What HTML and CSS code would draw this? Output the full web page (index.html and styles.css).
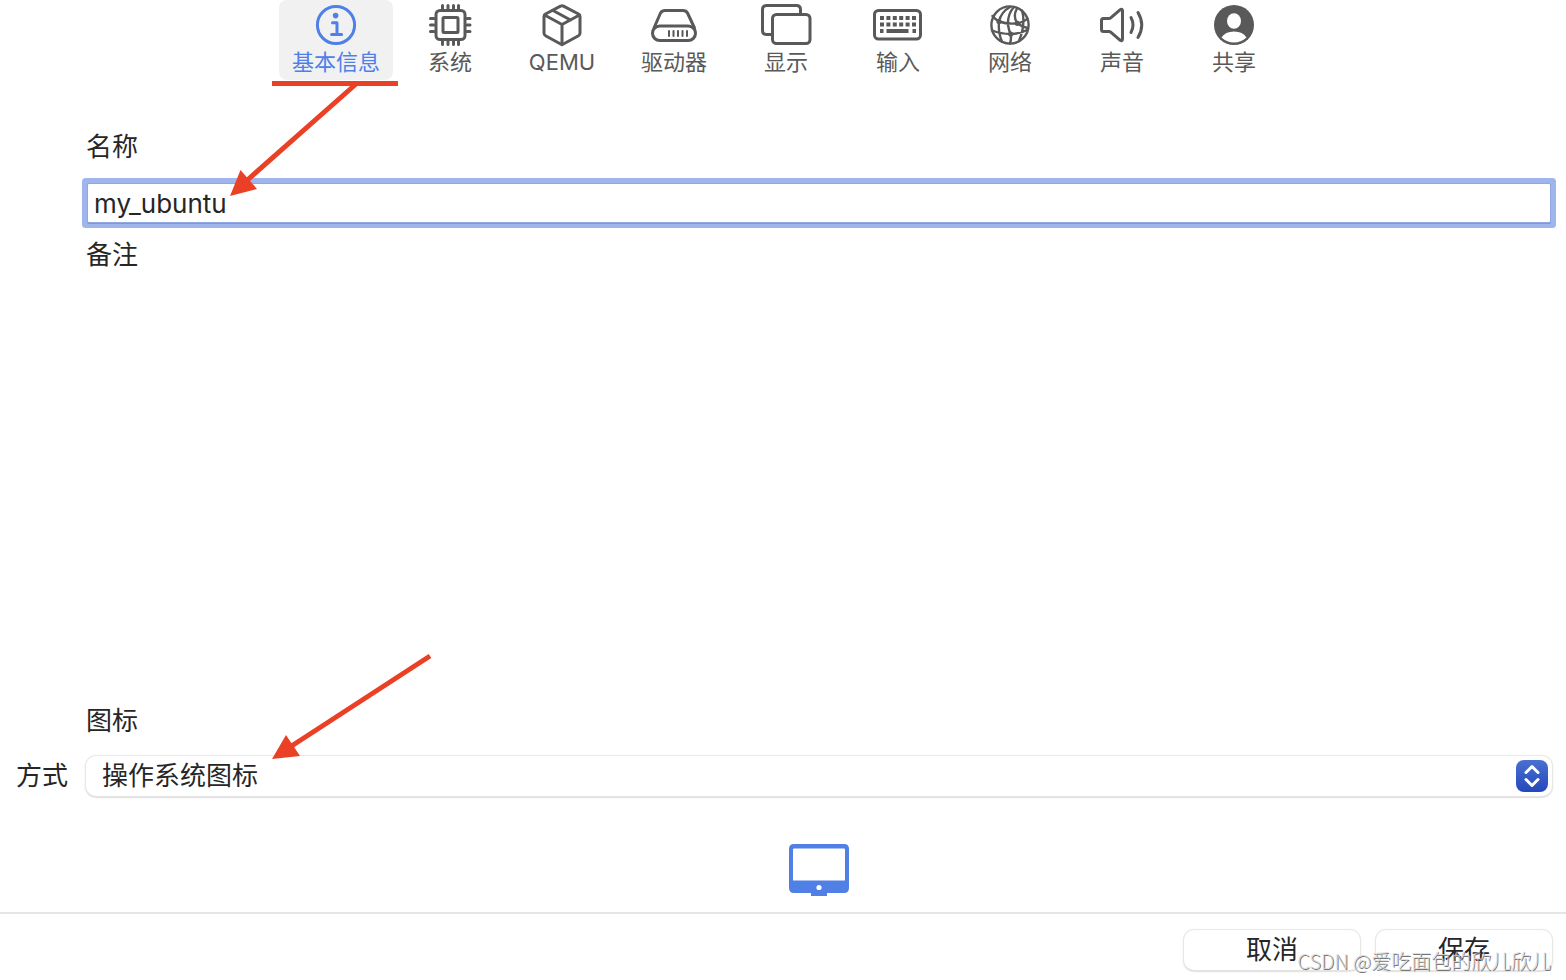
FILE: index.html
```html
<!DOCTYPE html>
<html lang="zh-CN">
<head>
    <meta charset="UTF-8">
    <meta name="viewport" content="width=device-width, initial-scale=1.0">
    <title>虚拟机设置</title>
    <link rel="stylesheet" href="styles.css">
</head>
<body>

<nav class="tabs">
    <button type="button" class="tab active">
        <svg class="icon" viewBox="0 0 52 48">
            <circle cx="26" cy="25" r="18.6"/>
            <circle class="solid" cx="25.6" cy="15.6" r="2.8"/>
            <path d="M22.5 22.8H27V34M21.6 34.4h10"/>
        </svg>
        <span>基本信息</span>
    </button>
    <button type="button" class="tab">
        <svg class="icon" viewBox="0 0 52 48">
            <rect x="12" y="10.500" width="29" height="29" rx="4"/>
            <rect x="19" y="17.500" width="15" height="15" rx="1"/>
            <path d="M18.500 9V5.500M24 9V5.500M29.500 9V5.500M34.500 9V5.500M18.500 41v3.500M24 41v3.500M29.500 41v3.500M34.500 41v3.500M10 18.500H6.500M10 25H6.500M10 31.500H6.500M43 18.500h3M43 25h3M43 31.500h3"/>
        </svg>
        <span>系统</span>
    </button>
    <button type="button" class="tab">
        <svg class="icon" viewBox="0 0 52 48">
            <path d="M24.500 6.200 9.500 14Q8 14.800 8 16.500V33q0 2 1.500 2.800L26 44.800l16.500-9Q44 35 44 33V16.500q0-1.700-1.500-2.500L27.500 6.200Q26 5.400 24.500 6.200Z"/>
            <path d="M8.500 15 26 24.500 43.500 15M26 24.500V44M17 10.500 34.500 20"/>
        </svg>
        <span>QEMU</span>
    </button>
    <button type="button" class="tab">
        <svg class="icon" viewBox="0 0 52 48">
            <path d="M6 28 12.500 13Q14 10.500 17 10.500H35Q38 10.500 39.500 13L46.500 28"/>
            <rect x="4.500" y="26" width="43" height="14.500" rx="7.200"/>
            <path class="thin" d="M21 31v5M25.500 31v5M30 31v5M34.500 31v5M39 31v5"/>
        </svg>
        <span>驱动器</span>
    </button>
    <button type="button" class="tab">
        <svg class="icon" viewBox="0 0 52 48">
            <path d="M11 34.500H6.500Q2.500 34.500 2.500 30.500V9.500Q2.500 5.500 6.500 5.500H36.500Q40.500 5.500 40.500 9.500V14"/>
            <rect x="12.500" y="14.500" width="37.500" height="29" rx="4"/>
        </svg>
        <span>显示</span>
    </button>
    <button type="button" class="tab">
        <svg class="icon" viewBox="0 0 52 48">
            <rect x="2.500" y="10.500" width="46" height="28.500" rx="4"/>
            <path class="keys" d="M8 18h36M8 24.500h36"/>
            <path class="bar" d="M8 31h3.500M14.500 31h22M40.500 31H44"/>
        </svg>
        <span>输入</span>
    </button>
    <button type="button" class="tab">
        <svg class="icon globe" viewBox="0 0 52 48">
            <circle cx="26" cy="25" r="18.600"/>
            <path d="M26 7Q17 12 15 21.500 14 33 18 41.500M30 7Q23.500 14 24 25 25 31 26.700 34 27.500 39 26 43.500M33 8.500Q28.500 16 33.300 23.300 38 27 43.500 28M8.500 16Q11 19 15 21.500 24 24.500 33.300 23.300 40 22 43.500 18.500M8 30.500Q17 34 26.700 34 37 33.500 43 30M38 10.500Q42 24 35 41"/>
            <circle class="solid" cx="15" cy="21.500" r="2.600"/>
            <circle class="solid" cx="33.300" cy="23.300" r="2.600"/>
            <circle class="solid" cx="26.700" cy="34" r="2.600"/>
        </svg>
        <span>网络</span>
    </button>
    <button type="button" class="tab">
        <svg class="icon" viewBox="0 0 52 48">
            <path d="M7.500 18.500H13Q14 18.500 15 17.600L24 9.800Q26.500 8.500 26.500 11V39Q26.500 41.500 24 40.200L15 32.400Q14 31.500 13 31.500H7.500Q5.500 31.500 5.500 29.500V20.500Q5.500 18.500 7.500 18.500Z"/>
            <path d="M35 17.500Q39 25 35 32.500M42 12.500Q49.500 25 42 37.500"/>
        </svg>
        <span>声音</span>
    </button>
    <button type="button" class="tab">
        <svg class="icon" viewBox="0 0 52 48">
            <circle class="solid" cx="26" cy="25" r="20"/>
            <ellipse class="hole" cx="26" cy="21" rx="7" ry="7.800"/>
            <path class="hole" d="M13.500 37.500Q17 31.500 26 31.500T38.500 37.500Q33 42.500 26 42.500T13.500 37.500Z"/>
        </svg>
        <span>共享</span>
    </button>
</nav>

<form class="settings">
    <label class="field-label" for="name">名称</label>
    <input type="text" id="name" value="my_ubuntu">
    <label class="field-label" for="notes">备注</label>
    <textarea id="notes"></textarea>
    <h2 class="field-label">图标</h2>
    <div class="style-row">
        <label for="icon_style">方式</label>
        <div class="picker">
            <select id="icon_style">
                <option>操作系统图标</option>
            </select>
            <svg class="stepper" viewBox="0 0 32 32">
                <path d="M10 12.500 16 6.500 22 12.500M10 19.500 16 25.500 22 19.500"/>
            </svg>
        </div>
    </div>
    <svg class="preview" viewBox="0 0 60 52">
        <path fill="#5080e6" fill-rule="evenodd" d="M5 0H55Q60 0 60 5V44Q60 49 55 49H38V52H22V49H5Q0 49 0 44V5Q0 0 5 0ZM5 4.500Q4 4.500 4 5.500V36.500H56V5.500Q56 4.500 55 4.500Z"/>
        <circle cx="30" cy="43.500" r="2.600" fill="#fff"/>
    </svg>
</form>

<footer class="actions">
    <button type="button">取消</button>
    <button type="button">保存</button>
</footer>

<!-- red marks drawn over the window -->
<svg class="marks" width="440" height="770" viewBox="0 0 440 770">
    <path class="line" d="M272 83.500H398M356 84 244 183M430 656 290 747"/>
    <path class="head" d="M230 196 240.500 170 257 189ZM272 759 286 735 300 756Z"/>
</svg>
<div class="watermark">CSDN @爱吃面包的欣儿欣儿</div>

</body>
</html>
```
FILE: styles.css
```css
* {
    box-sizing: border-box;
}
body {
    position: relative;
    display: flex;
    flex-direction: column;
    min-height: 100vh;
    margin: 0;
    background: #fff;
    color: #262626;
    font-family: Inter, "Noto Sans CJK SC", sans-serif;
    font-size: 26px;
    line-height: 36px;
}
button, input, select, textarea {
    color: inherit;
    font: inherit;
}

/* toolbar */
.tabs {
    display: flex;
    justify-content: center;
    gap: 2px;
    padding-left: 2px;
}
.tab {
    display: flex;
    flex-direction: column;
    align-items: center;
    width: 110px;
    height: 80px;
    padding: 0;
    border: none;
    border-radius: 8px;
    background: none;
    color: #595959;
    font-size: 22px;
    line-height: 28px;
    white-space: nowrap;
    cursor: pointer;
}
.tab.active {
    width: 114px;
    background: #f1f1f1;
    color: #4f80e8;
}
.icon {
    flex: none;
    width: 52px;
    height: 48px;
    fill: none;
    stroke: currentColor;
    stroke-width: 3;
    stroke-linecap: round;
    stroke-linejoin: round;
}
.icon .solid {
    fill: currentColor;
    stroke: none;
}
.icon .hole {
    fill: #fff;
    stroke: none;
}
.icon .thin {
    stroke-width: 2;
}
.icon .keys {
    stroke-width: 4;
    stroke-linecap: butt;
    stroke-dasharray: 4 2.4;
}
.icon .bar {
    stroke-width: 4;
    stroke-linecap: butt;
}
.globe {
    stroke-width: 2.4;
}

/* form */
.settings {
    flex: 1;
    display: flex;
    flex-direction: column;
    padding: 49px 16px 16px 88px;
}
.field-label {
    margin: 0 0 0 -2px;
    font-size: 26px;
    font-weight: normal;
}
#name {
    height: 38px;
    margin: 19px 0 15px;
    padding: 0 6px;
    border: none;
    outline: none;
    box-shadow: 0 0 0 1px #92a8e0, 0 1px 0 1px #8297cf, 0 0 0 6px #9fb5ec;
    border-radius: 1px;
}
#notes {
    flex: 1;
    min-height: 120px;
    border: none;
    outline: none;
    resize: none;
}
.style-row {
    display: flex;
    align-items: center;
    gap: 18px;
    margin: 17px -2px 48px -72px;
}
.picker {
    position: relative;
    flex: 1;
    display: flex;
}
.picker select {
    flex: 1;
    height: 40px;
    padding: 0 48px 0 16px;
    border: none;
    border-radius: 10px;
    background: #fff;
    box-shadow: 0 0 1px 1px #e8e8e8, 0 1px 2px #999;
    appearance: none;
}
.stepper {
    position: absolute;
    top: 4px;
    right: 4px;
    width: 32px;
    height: 32px;
    border-radius: 8px;
    background: linear-gradient(#4a70d0, #2448bc);
    fill: none;
    stroke: #fff;
    stroke-width: 3;
    stroke-linecap: round;
    stroke-linejoin: round;
    pointer-events: none;
}
.preview {
    align-self: center;
    width: 60px;
    height: 52px;
}

/* bottom buttons */
.actions {
    display: flex;
    justify-content: flex-end;
    gap: 16px;
    padding: 16px 14px 10px;
    border-top: 2px solid #e5e5e5;
}
.actions button {
    width: 176px;
    height: 40px;
    padding: 0;
    border: none;
    border-radius: 10px;
    background: #fff;
    box-shadow: 0 0 1px 1px #e8e8e8, 0 1px 2px #999;
    cursor: pointer;
}

.marks {
    position: absolute;
    top: 0;
    left: 0;
    pointer-events: none;
}
.marks .line {
    fill: none;
    stroke: #ea4025;
    stroke-width: 5;
}
.marks .head {
    fill: #ea4025;
}
.watermark {
    position: absolute;
    right: 15px;
    bottom: 5px;
    color: rgba(215, 215, 215, 0.8);
    font-family: "Noto Sans CJK SC", sans-serif;
    font-size: 20px;
    font-weight: 300;
    line-height: 28px;
    text-shadow: 1px 1px 0 #777;
    pointer-events: none;
}
```
